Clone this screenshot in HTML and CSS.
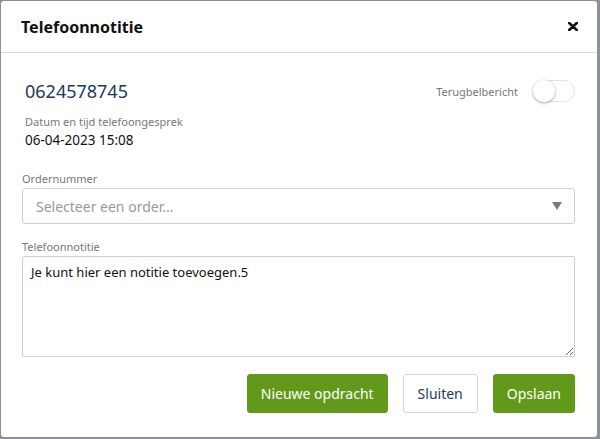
FILE: index.html
```html
<!DOCTYPE html>
<html lang="nl">
<head>
  <meta charset="UTF-8" />
  <meta name="viewport" content="width=device-width, initial-scale=1.0" />
  <title>Telefoonnotitie</title>
  <link rel="stylesheet" href="styles.css">
</head>
<body>

  <!-- Modal telefoonnotitie -->
  <div class="modal">
    <div class="modal-header">
      <h2 class="modal-titel">Telefoonnotitie</h2>
      <button class="sluit-kruis" aria-label="Sluiten">
        <svg width="10" height="9" viewBox="0 0 10 9">
          <path d="M1.2 1 L8.8 8 M8.8 1 L1.2 8" stroke="#111" stroke-width="2.6" stroke-linecap="round"/>
        </svg>
      </button>
    </div>

    <div class="modal-body">
      <div class="info-blok">
        <div class="top-rij">
          <span class="telefoon">0624578745</span>
          <label class="terugbel">
            <span>Terugbelbericht</span>
            <span class="schakelaar"><span class="knop"></span></span>
          </label>
        </div>
        <div class="label">Datum en tijd telefoongesprek</div>
        <div class="waarde">06-04-2023 15:08</div>
      </div>

      <div class="veld">
        <div class="label">Ordernummer</div>
        <div class="keuze">
          <span>Selecteer een order...</span>
          <span class="pijl"></span>
        </div>
      </div>

      <div class="veld">
        <div class="label">Telefoonnotitie</div>
        <textarea class="notitie">Je kunt hier een notitie toevoegen.5</textarea>
      </div>
    </div>

    <div class="modal-footer">
      <button class="knop-groen">Nieuwe opdracht</button>
      <button class="knop-wit">Sluiten</button>
      <button class="knop-groen">Opslaan</button>
    </div>
  </div>

</body>
</html>
```

FILE: styles.css
```css
* {
  box-sizing: border-box;
}

body {
  margin: 0;
  height: 439px;
  background-color: #8d9298;
  font-family: "Noto Sans", "Open Sans", sans-serif;
  overflow: hidden;
}

.modal {
  margin: 1px 0 0 1px;
  width: 596px;
  height: 436px;
  background-color: white;
  border-radius: 3px;
  display: flex;
  flex-direction: column;
}

.modal-header {
  height: 52px;
  padding: 0 19px 0 20px;
  border-bottom: 1px solid #dadada;
  display: flex;
  align-items: center;
  justify-content: space-between;
}

.modal-titel {
  margin: 0;
  font-size: 16px;
  font-weight: bold;
  color: #111;
}

.sluit-kruis {
  background: none;
  border: none;
  padding: 0;
  display: flex;
  cursor: pointer;
}

.modal-body {
  padding: 24px 22px 0 21px;
}

.info-blok {
  padding-left: 3px;
  margin-bottom: 22px;
}

.top-rij {
  display: flex;
  justify-content: space-between;
  align-items: center;
  height: 28px;
  margin-bottom: 9px;
}

.telefoon {
  font-size: 18px;
  color: #1c3b5c;
}

.terugbel {
  display: flex;
  align-items: center;
  gap: 15px;
  font-size: 11px;
  color: #777;
}

.schakelaar {
  width: 42px;
  height: 22px;
  border: 1px solid #e2e2e2;
  border-radius: 11px;
  position: relative;
}

.knop {
  position: absolute;
  left: -1px;
  top: -1px;
  width: 22px;
  height: 22px;
  border-radius: 50%;
  background: white;
  box-shadow: 0 1px 3px rgba(0,0,0,0.35);
}

.label {
  font-size: 11px;
  color: #777;
  line-height: 16px;
}

.waarde {
  font-size: 13.5px;
  color: #111;
  line-height: 18px;
  margin-top: 1px;
}

.veld {
  margin-bottom: 8px;
}

.veld .label {
  margin-bottom: 1px;
}

.keuze {
  height: 36px;
  border: 1px solid #cfcfcf;
  border-radius: 3px;
  padding: 0 12px 0 13px;
  display: flex;
  align-items: center;
  justify-content: space-between;
  font-size: 14px;
  color: #999;
  margin-bottom: 15px;
}

.pijl {
  width: 0;
  height: 0;
  border-left: 5px solid transparent;
  border-right: 5px solid transparent;
  border-top: 8px solid #7b7b7b;
}

.notitie {
  display: block;
  width: 100%;
  height: 101px;
  border: 1px solid #cfcfcf;
  border-radius: 2px;
  padding: 6px 8px;
  font-family: inherit;
  font-size: 13px;
  color: #111;
  resize: vertical;
}

.modal-footer {
  display: flex;
  justify-content: flex-end;
  gap: 15px;
  padding: 9px 22px 0 0;
}

.knop-groen,
.knop-wit {
  height: 39px;
  border-radius: 3px;
  font-family: inherit;
  font-size: 14px;
  cursor: pointer;
}

.knop-groen {
  padding: 0 13px;
  background-color: #63991a;
  border: 1px solid #63991a;
  color: white;
}

.knop-wit {
  padding: 0 14px;
  background-color: white;
  border: 1px solid #d6d6d6;
  color: #1c3b5c;
}
```
